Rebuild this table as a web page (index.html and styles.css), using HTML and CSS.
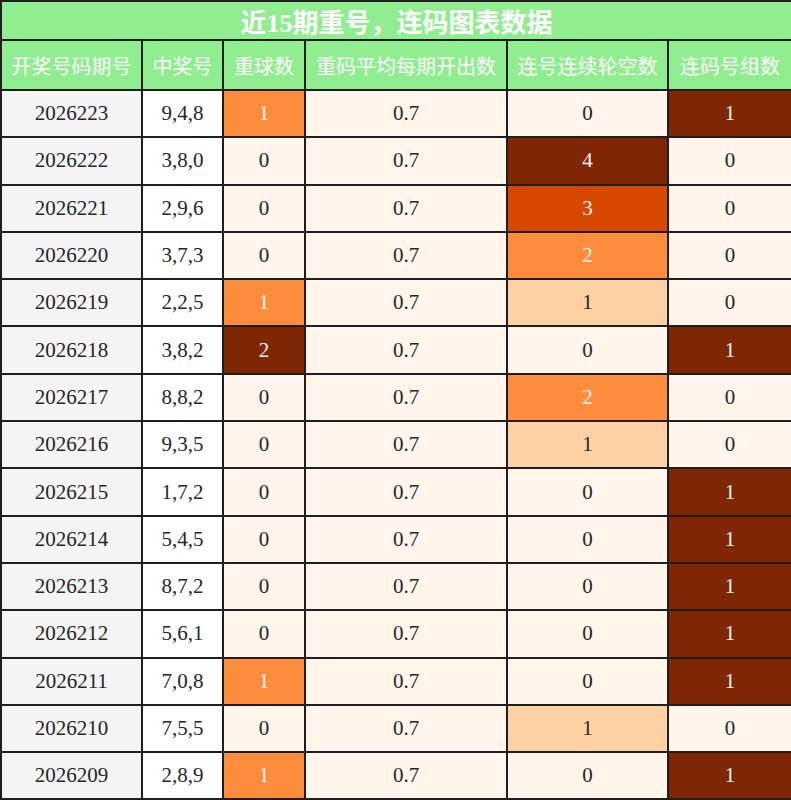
FILE: index.html
```html
<!DOCTYPE html>
<html lang="zh">
<head>
<meta charset="utf-8">
<title>近15期重号，连码图表数据</title>
<link rel="stylesheet" href="styles.css">
</head>
<body>
<table class="grid">
  <colgroup>
    <col class="c1"><col class="c2"><col class="c3"><col class="c4"><col class="c5"><col class="c6">
  </colgroup>
  <thead>
    <tr class="title-row"><th colspan="6" class="title">近15期重号，连码图表数据</th></tr>
    <tr class="head-row">
      <th>开奖号码期号</th><th>中奖号</th><th>重球数</th><th>重码平均每期开出数</th><th>连号连续轮空数</th><th>连码号组数</th>
    </tr>
  </thead>
  <tbody>
    <tr><td class="issue">2026223</td><td class="nums">9,4,8</td><td class="o50">1</td><td class="o0">0.7</td><td class="o0">0</td><td class="o100">1</td></tr>
    <tr><td class="issue">2026222</td><td class="nums">3,8,0</td><td class="o0">0</td><td class="o0">0.7</td><td class="o100">4</td><td class="o0">0</td></tr>
    <tr><td class="issue">2026221</td><td class="nums">2,9,6</td><td class="o0">0</td><td class="o0">0.7</td><td class="o75">3</td><td class="o0">0</td></tr>
    <tr><td class="issue">2026220</td><td class="nums">3,7,3</td><td class="o0">0</td><td class="o0">0.7</td><td class="o50">2</td><td class="o0">0</td></tr>
    <tr><td class="issue">2026219</td><td class="nums">2,2,5</td><td class="o50">1</td><td class="o0">0.7</td><td class="o25">1</td><td class="o0">0</td></tr>
    <tr><td class="issue">2026218</td><td class="nums">3,8,2</td><td class="o100">2</td><td class="o0">0.7</td><td class="o0">0</td><td class="o100">1</td></tr>
    <tr><td class="issue">2026217</td><td class="nums">8,8,2</td><td class="o0">0</td><td class="o0">0.7</td><td class="o50">2</td><td class="o0">0</td></tr>
    <tr><td class="issue">2026216</td><td class="nums">9,3,5</td><td class="o0">0</td><td class="o0">0.7</td><td class="o25">1</td><td class="o0">0</td></tr>
    <tr><td class="issue">2026215</td><td class="nums">1,7,2</td><td class="o0">0</td><td class="o0">0.7</td><td class="o0">0</td><td class="o100">1</td></tr>
    <tr><td class="issue">2026214</td><td class="nums">5,4,5</td><td class="o0">0</td><td class="o0">0.7</td><td class="o0">0</td><td class="o100">1</td></tr>
    <tr><td class="issue">2026213</td><td class="nums">8,7,2</td><td class="o0">0</td><td class="o0">0.7</td><td class="o0">0</td><td class="o100">1</td></tr>
    <tr><td class="issue">2026212</td><td class="nums">5,6,1</td><td class="o0">0</td><td class="o0">0.7</td><td class="o0">0</td><td class="o100">1</td></tr>
    <tr><td class="issue">2026211</td><td class="nums">7,0,8</td><td class="o50">1</td><td class="o0">0.7</td><td class="o0">0</td><td class="o100">1</td></tr>
    <tr><td class="issue">2026210</td><td class="nums">7,5,5</td><td class="o0">0</td><td class="o0">0.7</td><td class="o25">1</td><td class="o0">0</td></tr>
    <tr><td class="issue">2026209</td><td class="nums">2,8,9</td><td class="o50">1</td><td class="o0">0.7</td><td class="o0">0</td><td class="o100">1</td></tr>
  </tbody>
</table>
</body>
</html>
```
FILE: styles.css
```css
html, body {
  margin: 0;
  padding: 0;
  background: #ffffff;
}

.grid {
  width: 791px;
  table-layout: fixed;
  border-collapse: separate;
  border-spacing: 0;
  border: 1px solid #1e1e1e;
  font-family: "Liberation Serif", "Noto Sans CJK SC", serif;
  color: #262626;
}

.c1 { width: 141px; }
.c2 { width: 81px; }
.c3 { width: 82px; }
.c4 { width: 202px; }
.c5 { width: 161px; }
.c6 { width: 124px; }

.grid th,
.grid td {
  border: 1px solid #1e1e1e;
  padding: 0;
  text-align: center;
  vertical-align: middle;
}

.title {
  height: 37px;
  background: #90ee90;
  color: #ffffff;
  font-size: 26px;
  font-weight: bold;
  font-family: "Liberation Serif", "Noto Sans CJK SC", serif;
}

.head-row th {
  height: 48px;
  background: #90ee90;
  color: #ffffff;
  font-size: 20px;
  font-weight: normal;
  font-family: "Noto Sans CJK SC", sans-serif;
}

.grid td {
  height: 45.3px;
  font-size: 21px;
}

.issue { background: #f4f4f4; }
.nums { background: #ffffff; }

.o0 { background: #fff5eb; color: #262626; }
.o25 { background: #fdd1a3; color: #262626; }
.o50 { background: #fd8d3c; color: #f4f4f4; }
.o75 { background: #d94801; color: #f4f4f4; }
.o100 { background: #7f2704; color: #f4f4f4; }
```
